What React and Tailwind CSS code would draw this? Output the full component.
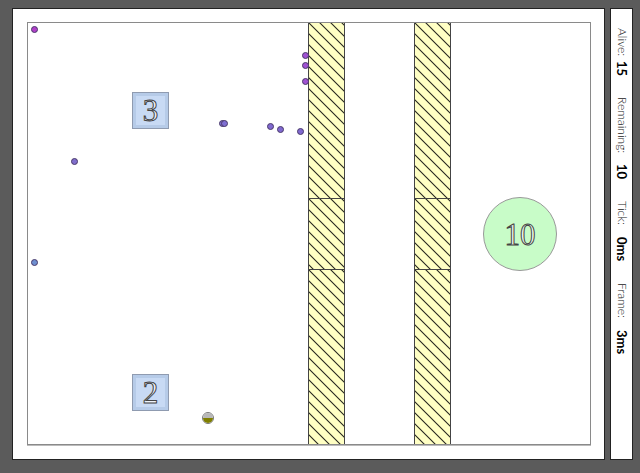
import React from "react";

function Hatch({ id }) {
  return (
    <svg className="absolute inset-0 w-full h-full" aria-hidden="true">
      <defs>
        <pattern id={id} width="11" height="11" patternUnits="userSpaceOnUse">
          <path d="M0 0L11 11M-2 9L2 13M9 -2L13 2" stroke="#26261e" strokeWidth="1.1" />
        </pattern>
      </defs>
      <rect width="100%" height="100%" fill={`url(#${id})`} />
    </svg>
  );
}

function Column({ left, name }) {
  return (
    <div className="absolute top-0 w-[37px] flex flex-col" style={{ left }}>
      <div className="relative h-[176px] bg-[#ffffc4] border-x border-b border-[#444]">
        <Hatch id={name + "a"} />
      </div>
      <div className="relative h-[71px] bg-[#ffffc4] border-x border-b border-[#444]">
        <Hatch id={name + "b"} />
      </div>
      <div className="relative h-[174px] bg-[#ffffc4] border-x border-[#444]">
        <Hatch id={name + "c"} />
      </div>
    </div>
  );
}

function Box({ top, label }) {
  return (
    <div
      className="absolute left-[104px] w-[37px] h-[37px] border border-[#8f9bb0] bg-[#b6cbe8] p-[3px]"
      style={{ top }}
    >
      <div className="w-full h-full bg-[#c8daf4] flex items-center justify-center font-['Liberation_Serif',serif] text-[31px] leading-none text-[#eef3fb] [-webkit-text-stroke:1px_#444]">
        {label}
      </div>
    </div>
  );
}

const dots = [
  { x: 3, y: 3, c: "#b13fc9" },
  { x: 273.5, y: 29.2, c: "#a052d2" },
  { x: 273.5, y: 39.2, c: "#a052d2" },
  { x: 273.5, y: 55.2, c: "#a052d2" },
  { x: 190.5, y: 96.5, c: "#7f6fd2" },
  { x: 192.8, y: 96.5, c: "#7f6fd2" },
  { x: 238.8, y: 99.8, c: "#8069d0" },
  { x: 249.2, y: 102.8, c: "#8069d0" },
  { x: 268.5, y: 105.2, c: "#8069d0" },
  { x: 42.5, y: 134.5, c: "#806ecc" },
  { x: 2.5, y: 235.5, c: "#6e8fd0" },
];

function Stat({ label, value, gap }) {
  return (
    <div className="flex items-center">
      <span className="font-light text-[#222]">{label}</span>
      <span className="font-bold text-black text-[13px]" style={{ marginTop: gap }}>
        {value}
      </span>
    </div>
  );
}

export default function App() {
  return (
    <div className="w-[640px] h-[473px] bg-[#5b5b5b] flex pt-2 pl-3 gap-[5px]">
      <div className="w-[593px] h-[452px] bg-white border border-[#222] pl-[14px] pt-[13px]">
        <div className="relative w-[564px] h-[423px] border border-[#8a8a8a] shadow-[0_1px_0_#bbb]">
          <Column left={280} name="h1" />
          <Column left={386} name="h2" />
          <Box top={69} label="3" />
          <Box top={351} label="2" />
          <div className="absolute left-[455px] top-[174px] w-[74px] h-[74px] rounded-full bg-[#c8fcc8] border border-[#999] flex items-center justify-center font-['Liberation_Serif',serif] text-[31px] leading-none text-[#eefbee] [-webkit-text-stroke:1px_#444]">
            10
          </div>
          {dots.map((d, i) => (
            <div
              key={i}
              className="absolute w-[7px] h-[7px] rounded-full border border-[#4a3a6a]"
              style={{ left: d.x, top: d.y, background: d.c }}
            />
          ))}
          <div className="absolute left-[174px] top-[389px] w-[12px] h-[12px] rounded-full border border-[#777] overflow-hidden flex flex-col">
            <div className="h-1/2 bg-[#b8b8b8]" />
            <div className="h-1/2 bg-[#7f7f00]" />
          </div>
        </div>
      </div>
      <div className="w-[23px] h-[452px] bg-white border border-[#222] flex justify-center">
        <div className="[writing-mode:vertical-rl] flex pt-[19px] gap-[21px] font-['Lato',sans-serif] text-[12px] leading-none">
          <Stat label="Alive:" value="15" gap={5} />
          <Stat label="Remaining:" value="10" gap={11} />
          <Stat label="Tick:" value="0ms" gap={13} />
          <Stat label="Frame:" value="3ms" gap={12} />
        </div>
      </div>
    </div>
  );
}
